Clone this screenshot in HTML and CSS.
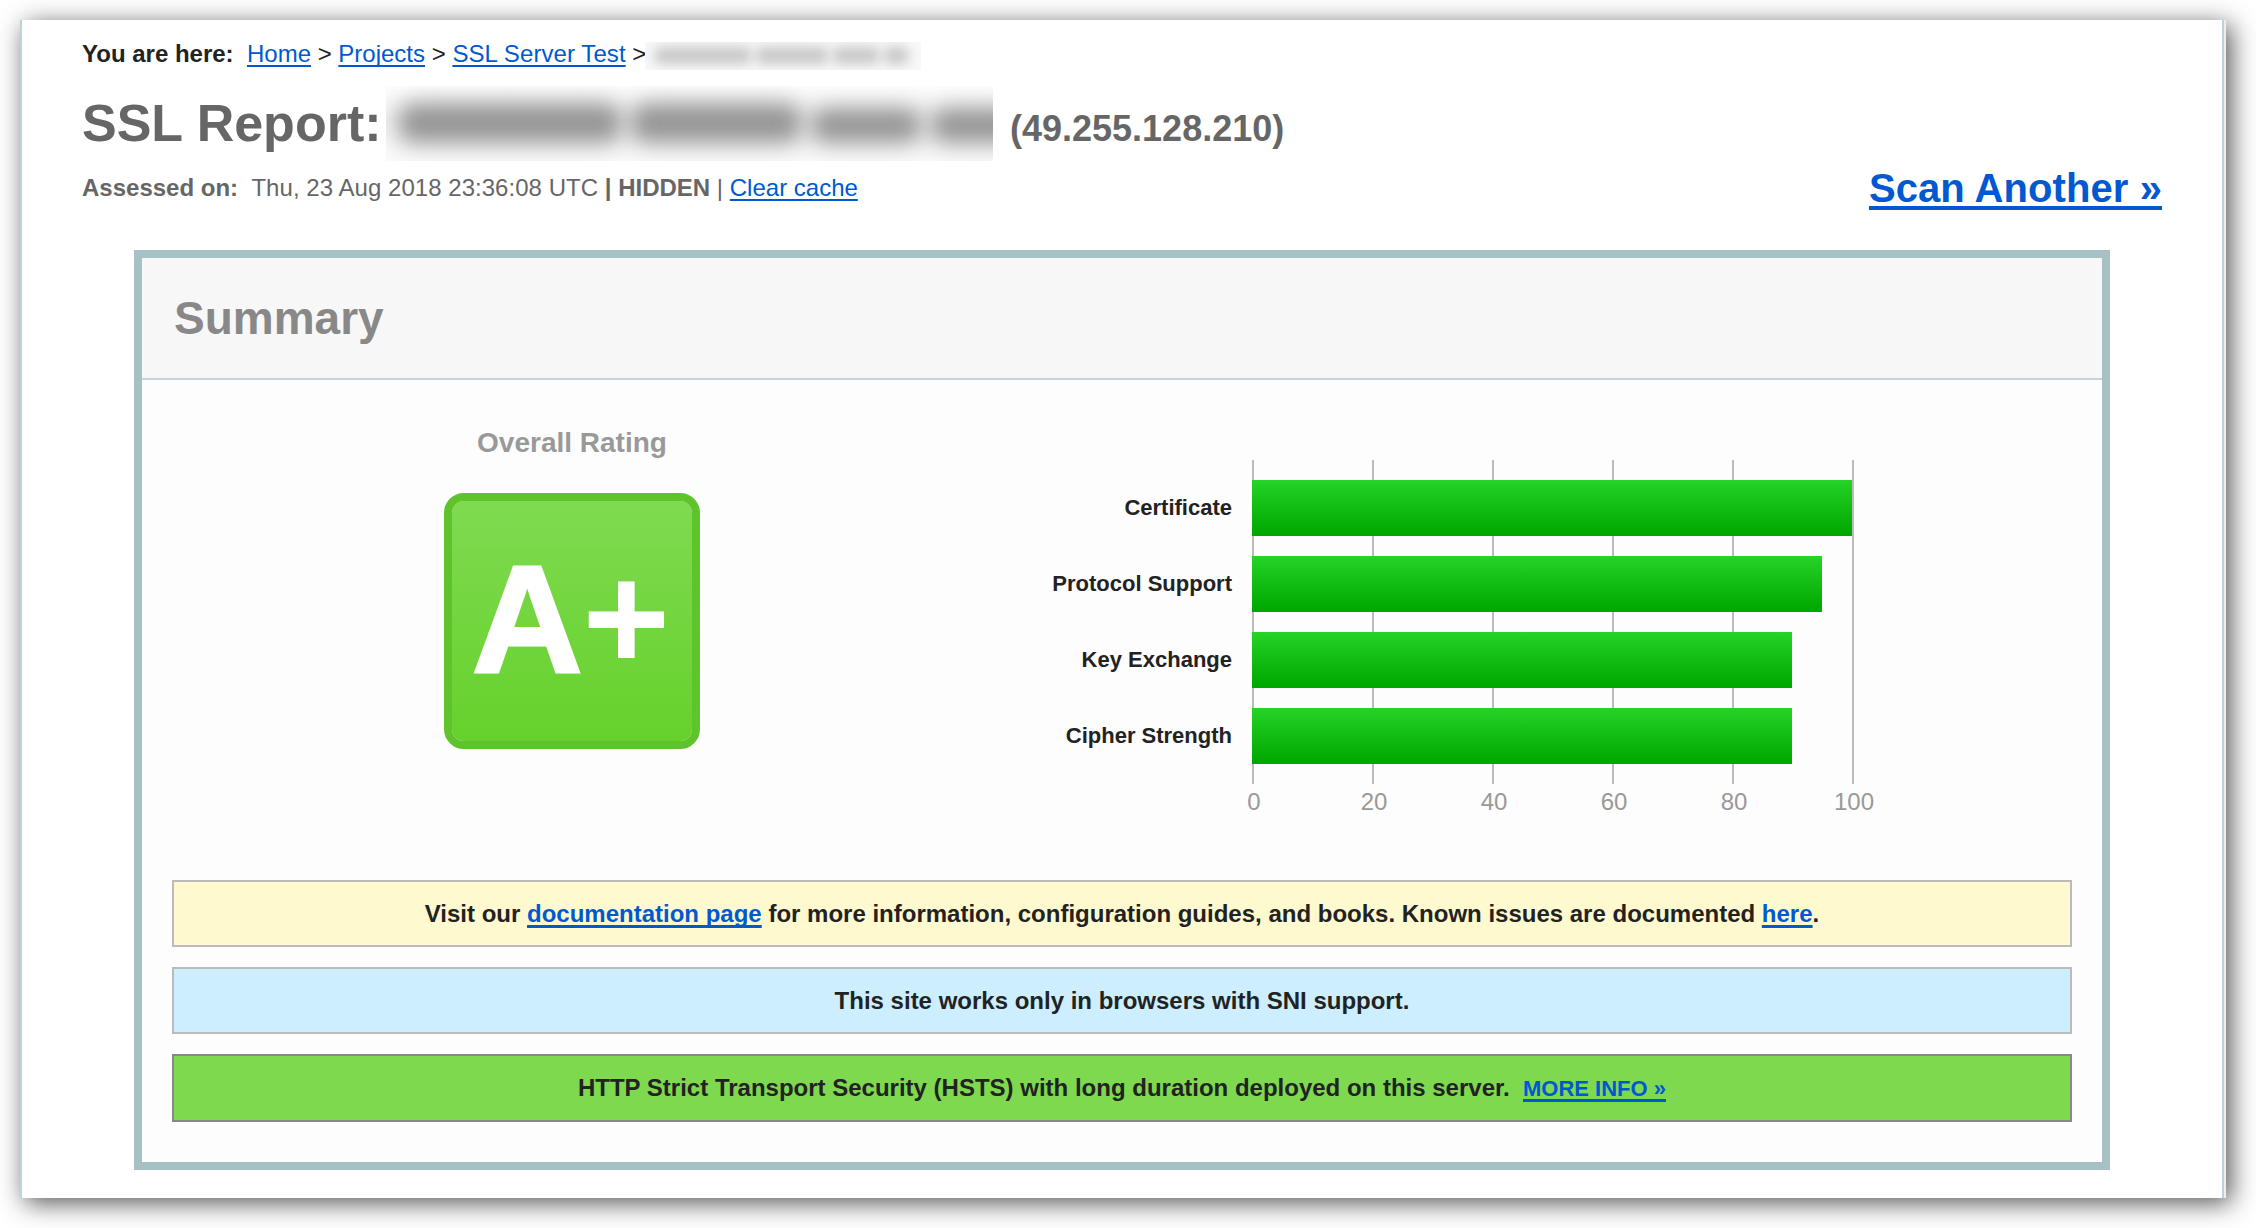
FILE: index.html
```html
<!DOCTYPE html>
<html lang="en">
<head>
<meta charset="utf-8">
<title>SSL Report</title>
<link rel="stylesheet" href="styles.css">
</head>
<body>
<main class="window">
  <header class="page-head">
    <nav class="crumbs"><b>You are here:&nbsp; </b><a href="#">Home</a> &gt; <a href="#">Projects</a> &gt; <a class="last" href="#">SSL Server Test</a> &gt;<span class="redacted redacted-small"><i></i><i></i><i></i><i></i></span></nav>
    <h1 class="title"><span>SSL Report:</span><span class="redacted redacted-large"><i></i><i></i><i></i><i></i></span><span class="ip">(49.255.128.210)</span></h1>
    <div class="meta">
      <div class="assessed"><b>Assessed on:</b>&nbsp; <span class="date">Thu, 23 Aug 2018 23:36:08 UTC</span> <b>| HIDDEN</b> | <a href="#">Clear cache</a></div>
      <a class="scan" href="#">Scan Another »</a>
    </div>
  </header>
  <section class="card">
    <h2 class="card-head">Summary</h2>
    <div class="overview">
      <div class="rating">
        <div class="rating-title">Overall Rating</div>
        <div class="grade">A<span class="plus">+</span></div>
      </div>
      <div class="chart">
        <div class="labels"><span>Certificate</span><span>Protocol Support</span><span>Key Exchange</span><span>Cipher Strength</span></div>
        <div class="graph">
          <div class="plot">
            <div class="bar" style="width:600px"></div>
            <div class="bar" style="width:570px"></div>
            <div class="bar" style="width:540px"></div>
            <div class="bar" style="width:540px"></div>
          </div>
          <div class="axis"><span>0</span><span>20</span><span>40</span><span>60</span><span>80</span><span>100</span></div>
        </div>
      </div>
    </div>
    <div class="notes">
      <p class="note note-yellow">Visit our <a href="#">documentation page</a> for more information, configuration guides, and books. Known issues are documented <a href="#">here</a>.</p>
      <p class="note note-blue">This site works only in browsers with SNI support.</p>
      <p class="note note-green">HTTP Strict Transport Security (HSTS) with long duration deployed on this server.&nbsp; <a class="more" href="#">MORE INFO »</a></p>
    </div>
  </section>
</main>
</body>
</html>
```
FILE: styles.css
```css
* { box-sizing: border-box; }
html { background: #fff; }
body {
  margin: 0;
  padding: 20px 30px 30px 20px;
  height: 1228px;
  overflow: hidden;
  font: 24px/28px "Liberation Sans", Arial, sans-serif;
  color: #222;
}
h1, h2, p { margin: 0; }
a {
  color: #0059d0;
  text-decoration: underline 2px;
  text-underline-offset: 3px;
  text-decoration-skip-ink: none;
}
.window {
  width: 2206px;
  height: 1178px;
  background: #fff;
  border-left: 2px solid #bcd3dc;
  border-right: 2px solid #eee;
  box-shadow: inset -2px 0 #bcd3dc, 5px 5px 24px rgba(0, 0, 0, .67);
  padding: 20px 62px 0 60px;
}
.page-head { height: 210px; color: #666; }
.crumbs { display: flow-root; height: 46px; color: #222; white-space: nowrap; }
.crumbs .last { letter-spacing: .08px; }
.title { display: flex; align-items: baseline; height: 75px; font-size: 52px; line-height: 75px; white-space: nowrap; }
.title > span:first-child { width: 304px; }
.ip { font-size: 36px; margin-left: 17px; }
.meta { display: flex; justify-content: space-between; align-items: flex-start; margin-top: 5px; }
.assessed { margin-top: 8px; }
.date { letter-spacing: .04px; }
.scan { margin-top: -1px; font-size: 40px; line-height: 46px; font-weight: bold; letter-spacing: .08px; text-decoration-thickness: 4px; text-underline-offset: 4px; }

.redacted { display: inline-flex; overflow: hidden; background: #f8f8f8; }
.redacted i { flex: none; }
.redacted-small { width: 276px; height: 28px; gap: 3px; padding: 5px 0 0 9px; vertical-align: top; margin: 2px 0 0 -1px; }
.redacted-small i { height: 17px; background: #c8c8c8; border-radius: 8px; filter: blur(6px); }
.redacted-small i:nth-child(1) { width: 98px; }
.redacted-small i:nth-child(2) { width: 74px; }
.redacted-small i:nth-child(3) { width: 48px; }
.redacted-small i:nth-child(4) { width: 26px; }
.redacted-large { width: 607px; height: 75px; gap: 8px; padding: 17px 0 0 12px; align-self: flex-start; background: linear-gradient(#fdfdfd, #f3f3f3 45%, #fafafa); }
.redacted-large i { height: 40px; background: #959595; border-radius: 16px; filter: blur(11px); }
.redacted-large i:nth-child(1) { width: 224px; }
.redacted-large i:nth-child(2) { width: 172px; }
.redacted-large i:nth-child(3) { width: 112px; height: 35px; margin-top: 5px; }
.redacted-large i:nth-child(4) { width: 90px; height: 35px; margin-top: 5px; }

.card { width: 1976px; height: 920px; margin-left: 52px; border: 8px solid #a7c0c4; background: #fdfdfd; }
.card-head { height: 122px; padding-left: 32px; font-size: 46px; line-height: 120px; color: #888; background: #f7f7f7; border-bottom: 2px solid #c5d4d6; }
.overview { display: flex; height: 500px; }
.rating { width: 256px; margin: 47px 0 0 302px; text-align: center; }
.rating-title { height: 66px; font-size: 28px; line-height: 32px; font-weight: bold; color: #999; }
.grade {
  height: 256px;
  padding-left: 20px;
  border: 8px solid #5fc42c;
  border-radius: 20px;
  background: linear-gradient(#7fda50, #66d12c) padding-box;
  color: #fff;
  font-size: 153px;
  line-height: 235px;
  font-weight: bold;
  text-align: left;
  white-space: nowrap;
  -webkit-text-stroke: 3px #fff;
}
.plus { margin-left: 0; font-size: 150px; line-height: 1; vertical-align: 2px; -webkit-text-stroke: 0; }
.chart { display: flex; margin: 80px 0 0 332px; }
.labels { display: flex; flex-direction: column; gap: 20px; width: 200px; padding-top: 20px; text-align: right; font-size: 22px; font-weight: bold; line-height: 55px; }
.labels span { height: 56px; }
.graph { width: 602px; margin-left: 20px; }
.plot { display: flex; flex-direction: column; gap: 20px; height: 324px; padding: 20px 0; background: repeating-linear-gradient(to right, #bbb 0 2px, transparent 2px 120px); }
.bar { height: 56px; background: linear-gradient(#26d327, #00a800 95%); }
.axis { display: flex; width: 720px; margin-left: -58px; padding-top: 4px; color: #999; }
.axis span { width: 120px; text-align: center; }
.notes { display: flex; flex-direction: column; gap: 20px; padding: 0 30px; }
.note { height: 67px; border: 2px solid #bbb; text-align: center; font-weight: bold; line-height: 63px; }
.note a { text-decoration-thickness: 3px; }
.note-yellow { background: #fff9d0; }
.note-blue { background: #cceeff; }
.note-green { height: 68px; background: #7ed94f; border-color: #888; }
.note .more { font-size: 22px; }
```
